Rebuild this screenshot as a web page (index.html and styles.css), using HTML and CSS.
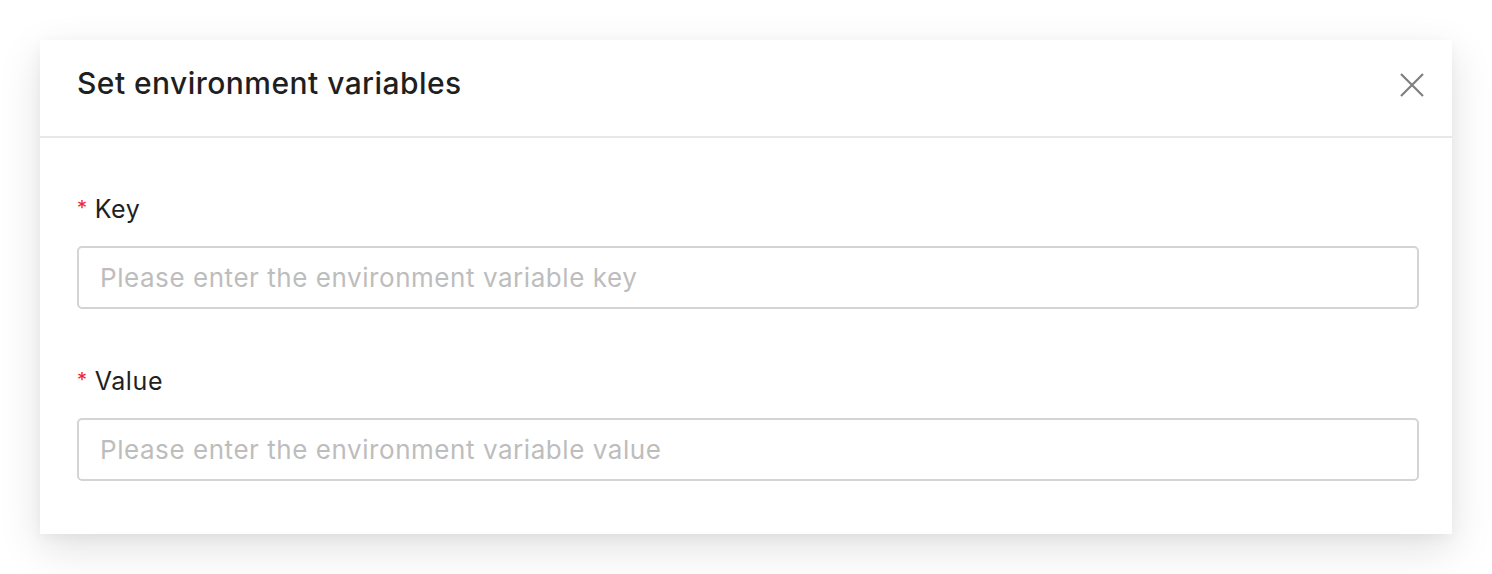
FILE: index.html
```html
<!DOCTYPE html>
<html>
<head>
<meta charset="utf-8">
<link rel="stylesheet" href="styles.css">
</head>
<body>
<div class="modal">
  <div class="modal-header">
    <div class="modal-title">Set environment variables</div>
    <button class="close" aria-label="Close">
      <svg width="24" height="24" viewBox="0 0 24 24"><path d="M1 1 L23 23 M23 1 L1 23" stroke="#7f7f7f" stroke-width="2.2" fill="none"/></svg>
    </button>
  </div>
  <div class="modal-body">
    <div class="field">
      <label class="label"><span class="req">*</span>Key</label>
      <input class="input" placeholder="Please enter the environment variable key">
    </div>
    <div class="field">
      <label class="label"><span class="req">*</span>Value</label>
      <input class="input" placeholder="Please enter the environment variable value">
    </div>
  </div>
</div>
</body>
</html>
```
FILE: styles.css
```css
html, body { margin: 0; background: #fff; }
body { padding: 40px 40px 40px 40px; min-height: 574px; box-sizing: border-box; font-family: Inter, "Liberation Sans", sans-serif; }
.modal {
  width: 1412px;
  background: #fff;
  box-shadow: 0 14px 40px rgba(0,0,0,0.12), 0 4px 12px rgba(0,0,0,0.04);
}
.modal-header {
  border-bottom: 2px solid #e8e8e8;
  display: flex;
  align-items: center;
  justify-content: space-between;
  padding: 0 28px 10px 37px;
  box-sizing: border-box;
  height: 98px;
}
.modal-title { font-size: 30px; letter-spacing: 0.45px; color: #1f1f1f; font-weight: 500; }
.close { border: 0; background: none; padding: 0; width: 24px; height: 24px; display: flex; cursor: pointer; margin-top: 4px; }
.modal-body { padding: 53px 33px 53px 37px; }
.field { display: flex; flex-direction: column; }
.field + .field { margin-top: 54px; }
.label { font-size: 25px; letter-spacing: 0.6px; line-height: 36px; color: #1f1f1f; margin-bottom: 19px; display: flex; align-items: center; }
.req { color: #f5222d; font-size: 20px; margin-right: 7px; line-height: 1; position: relative; top: -1px; }
.input {
  height: 63px; box-sizing: border-box;
  border: 2px solid #d4d4d4; border-radius: 5px;
  padding: 0 21px; font-size: 26px; letter-spacing: 0.55px; font-family: inherit; color: #333; outline: none;
}
.input::placeholder { color: #bdbdbd; }
```
